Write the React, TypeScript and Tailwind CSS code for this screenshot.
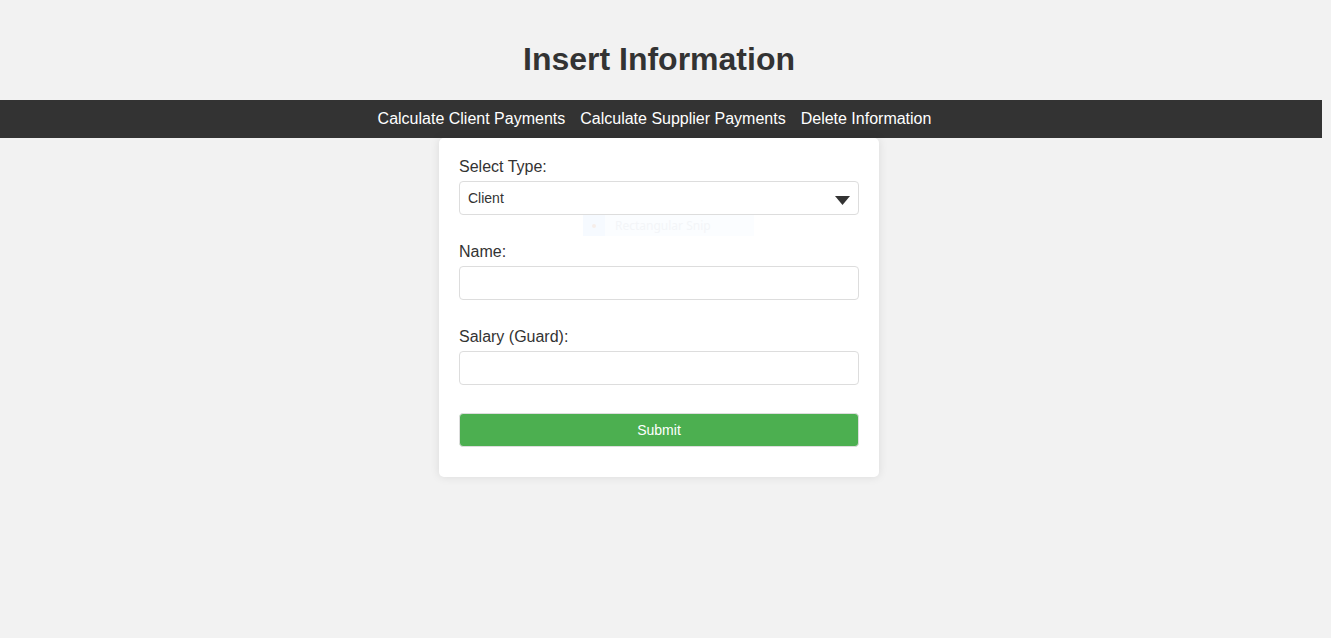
import React, { useState } from 'react'

const font = { fontFamily: '"Liberation Sans", Arial, sans-serif' }

export default function App() {
    const [type, setType] = useState('client')
    const [name, setName] = useState('')
    const [salary, setSalary] = useState('')

    return (
        <div className="min-h-screen w-full bg-[#f2f2f2] text-[#333]" style={font}>
            <div className="w-[1322px]">
                <div className="w-[1318px] pt-[41px] pb-[22px]">
                    <h1 className="text-center text-[32px] leading-[37px] font-bold text-[#333]">Insert Information</h1>
                </div>

                <nav className="h-[38px] bg-[#333]">
                    <div className="w-[1318px] h-full flex items-center justify-center gap-[15px] pr-[9px] text-[16px] text-white">
                        <a href="#" className="text-white">Calculate Client Payments</a>
                        <a href="#" className="text-white">Calculate Supplier Payments</a>
                        <a href="#" className="text-white">Delete Information</a>
                    </div>
                </nav>

                <div className="w-[1318px] flex justify-center">
                    <div className="relative w-[440px] bg-white rounded-[5px] shadow-[0_0_10px_rgba(0,0,0,0.1)] px-5 pt-5 pb-[30px]">
                        <form onSubmit={(e) => e.preventDefault()}>
                            <label htmlFor="type" className="block text-[16px] leading-[18px] mb-[5px]">Select Type:</label>
                            <div className="relative mb-[28px]">
                                <select
                                    id="type"
                                    value={type}
                                    onChange={(e) => setType(e.target.value)}
                                    className="appearance-none w-full h-[34px] border border-[#ddd] rounded-[4px] bg-white pl-2 text-[14px] text-[#333] outline-none"
                                >
                                    <option value="client">Client</option>
                                    <option value="supplier">Supplier</option>
                                </select>
                                <svg className="pointer-events-none absolute right-[9px] top-[15px]" width="15" height="9" viewBox="0 0 15 9">
                                    <polygon points="0,0 15,0 7.5,9" fill="#333" />
                                </svg>
                                {/* faint snipping tool leftover */}
                                <div className="pointer-events-none absolute left-[124px] top-[34px] w-[171px] h-[21px] flex items-center bg-[#fbfdff]">
                                    <div className="w-[22px] h-full bg-[#f6faff] flex items-center justify-center">
                                        <div className="w-[4px] h-[4px] rounded-full bg-[#f6eeea]" />
                                    </div>
                                    <span className="ml-[10px] text-[12px] text-[#f3f5f8]" style={{ fontFamily: '"Noto Sans", sans-serif' }}>Rectangular Snip</span>
                                </div>
                            </div>

                            <label htmlFor="name" className="block text-[16px] leading-[18px] mb-[5px]">Name:</label>
                            <input
                                id="name"
                                type="text"
                                value={name}
                                onChange={(e) => setName(e.target.value)}
                                className="block w-full h-[34px] border border-[#ddd] rounded-[4px] px-2 text-[14px] outline-none mb-[28px]"
                            />

                            <label htmlFor="salary" className="block text-[16px] leading-[18px] mb-[5px]">Salary (Guard):</label>
                            <input
                                id="salary"
                                type="text"
                                value={salary}
                                onChange={(e) => setSalary(e.target.value)}
                                className="block w-full h-[34px] border border-[#ddd] rounded-[4px] px-2 text-[14px] outline-none mb-[28px]"
                            />

                            <button
                                type="submit"
                                className="block w-full h-[34px] bg-[#4caf50] border border-[#ddd] rounded-[4px] text-white text-[14px]"
                            >
                                Submit
                            </button>
                        </form>
                    </div>
                </div>
            </div>
        </div>
    )
}
